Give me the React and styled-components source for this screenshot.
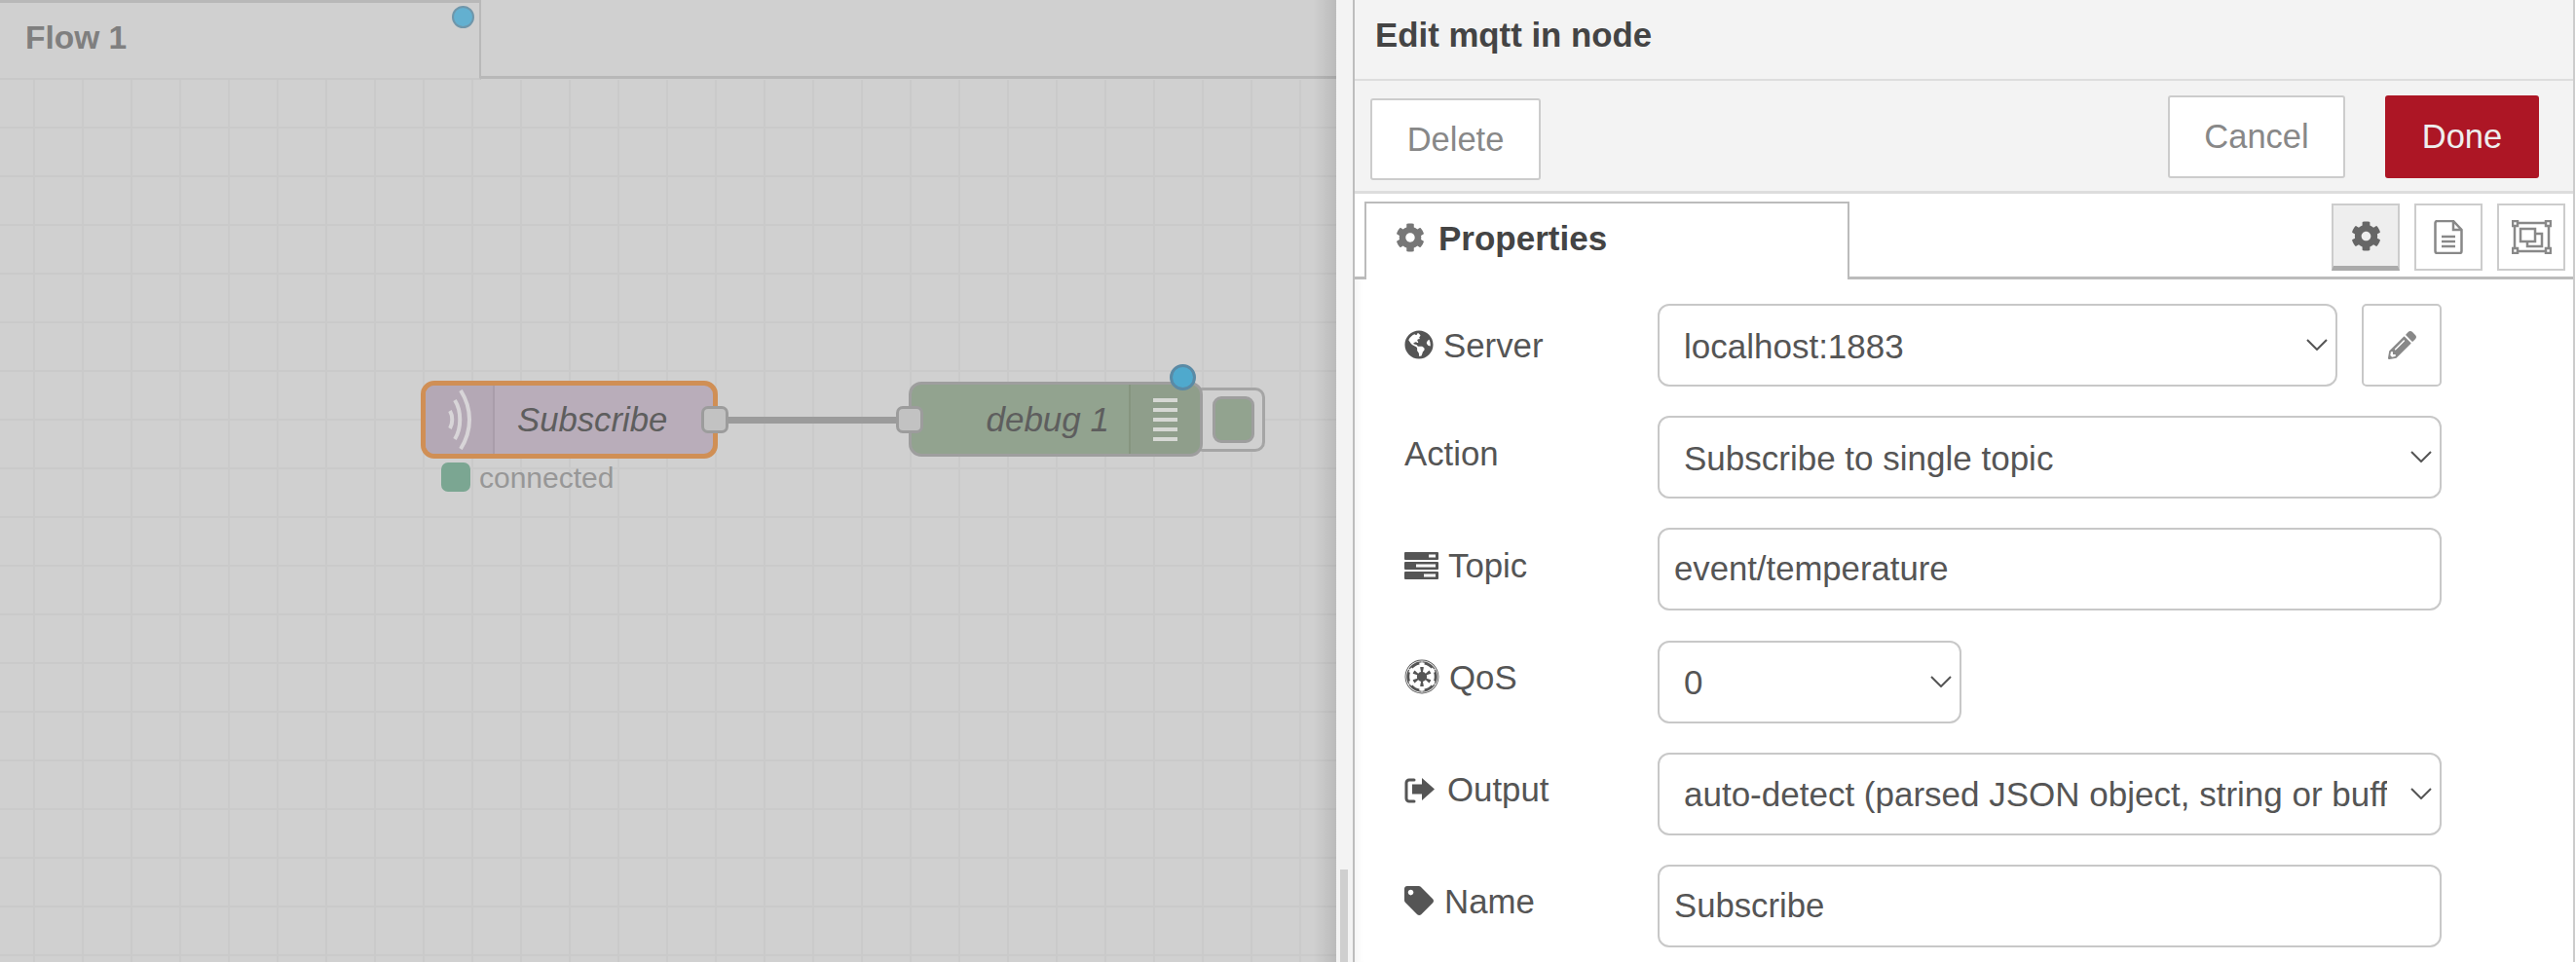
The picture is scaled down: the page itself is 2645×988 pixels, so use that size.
import styled, { createGlobalStyle } from "styled-components";
import { FaCog, FaEmpire, FaGlobeAmericas, FaPencilAlt, FaTag } from "react-icons/fa";

const GlobalStyle = createGlobalStyle`
  html, body { margin: 0; padding: 0; background: #fff; }
  * { box-sizing: border-box; }
  body { font-family: "Liberation Sans", Arial, sans-serif; overflow: hidden; }
`;

const TasksIcon = () => (
  <svg width="35" height="28" viewBox="0 0 35 28">
    <g fill="#555">
      <rect y="0" width="35" height="8" rx="1" />
      <rect y="10" width="35" height="8" rx="1" />
      <rect y="20" width="35" height="8" rx="1" />
    </g>
    <g fill="#fff">
      <rect x="25" y="2.5" width="7" height="3" />
      <rect x="12" y="12.5" width="20" height="3" />
      <rect x="20" y="22.5" width="12" height="3" />
    </g>
  </svg>
);

const SignOutIcon = () => (
  <svg width="31" height="26" viewBox="0 0 31 26">
    <path d="M10 2H5a3 3 0 0 0-3 3v16a3 3 0 0 0 3 3h5" fill="none" stroke="#555" strokeWidth="3" strokeLinecap="round" />
    <path d="M18 0 31 11.500 18 23V16.500H8V6.500H18Z" fill="#555" />
  </svg>
);

const FileIcon = () => (
  <svg width="30" height="35" viewBox="0 0 30 35" fill="none" stroke="#888" strokeWidth="2.5">
    <path d="M1.500 3a2 2 0 0 1 2-2H20l8.500 9v22a2 2 0 0 1-2 2h-23a2 2 0 0 1-2-2Z" />
    <path d="M20 1v9h8.500" />
    <path d="M8 17H22M8 22H22M8 27H22" />
  </svg>
);

const AreaIcon = () => (
  <svg width="41" height="35" viewBox="0 0 41 35" fill="none" stroke="#888" strokeWidth="2.5">
    <path d="M6 3H35M38 6V29M35 32H6M3 29V6" />
    <rect x="1" y="1" width="5" height="5" />
    <rect x="35" y="1" width="5" height="5" />
    <rect x="1" y="29" width="5" height="5" />
    <rect x="35" y="29" width="5" height="5" />
    <rect x="9" y="9" width="15" height="13" />
    <path d="M24 14H31V27H16V22" />
  </svg>
);

const WaveIcon = () => (
  <svg width="24" height="62" viewBox="0 0 24 62" fill="none" stroke="#d8d5d8" strokeWidth="4">
    <path d="M2 22C5 27 5 35 2 40" />
    <path d="M7 11C14 22 14 40 7 51" />
    <path d="M13 1C25 20 25 42 13 61" />
  </svg>
);

const Chevron = () => (
  <svg width="22" height="12" viewBox="0 0 22 12" fill="none" stroke="#555" strokeWidth="2">
    <path d="M1 1 11 11 21 1" />
  </svg>
);

const fields = [
  { label: "Server", icon: <FaGlobeAmericas size={30} color="#555" />, offset: 27, gap: 10, kind: "server", value: "localhost:1883" },
  { label: "Action", offset: 23, kind: "select", value: "Subscribe to single topic" },
  { label: "Topic", icon: <TasksIcon />, offset: 23, gap: 10, kind: "input", value: "event/temperature" },
  { label: "QoS", icon: <FaEmpire size={36} color="#555" />, iconDrop: 3, offset: 22, gap: 10, kind: "short", value: "0" },
  { label: "Output", icon: <SignOutIcon />, offset: 22, gap: 13, kind: "select", value: "auto-detect (parsed JSON object, string or buffer)" },
  { label: "Name", icon: <FaTag size={30} color="#555" />, offset: 22, gap: 11, kind: "input", value: "Subscribe" },
];

function Field({ field }) {
  if (field.kind === "input") {
    return <TextInput defaultValue={field.value} />;
  }
  const select = (
    <SelectWrap $width={field.kind === "short" ? "312px" : "100%"} $grow={field.kind === "server"}>
      <Select defaultValue={field.value}>
        <option>{field.value}</option>
      </Select>
      <ChevronSlot><Chevron /></ChevronSlot>
    </SelectWrap>
  );
  if (field.kind === "server") {
    return (
      <ServerRow>
        {select}
        <EditButton><FaPencilAlt size={29} color="#888" /></EditButton>
      </ServerRow>
    );
  }
  return select;
}

export default function App() {
  return (
    <Page>
      <GlobalStyle />
      <Canvas>
        <TabBar>
          <FlowTab>
            Flow 1
            <TabDot />
          </FlowTab>
          <TabFiller />
        </TabBar>
        <Workspace>
          <Wire />
          <MqttNode>
            <MqttIcon><WaveIcon /></MqttIcon>
            <NodeLabel>Subscribe</NodeLabel>
            <Port $side="right" />
          </MqttNode>
          <StatusRow>
            <StatusDot />
            connected
          </StatusRow>
          <DebugButton><DebugSquare /></DebugButton>
          <DebugNode>
            <DebugLabel>debug 1</DebugLabel>
            <DebugIcon>
              {[0, 1, 2, 3, 4].map((i) => <DebugLine key={i} />)}
            </DebugIcon>
            <Port $side="left" />
            <ChangedDot />
          </DebugNode>
        </Workspace>
        <EdgeShadow />
      </Canvas>

      <Handle><HandleThumb /></Handle>

      <Tray>
        <TrayHeader>Edit mqtt in node</TrayHeader>
        <Toolbar>
          <DeleteButton>Delete</DeleteButton>
          <ToolbarRight>
            <CancelButton>Cancel</CancelButton>
            <DoneButton>Done</DoneButton>
          </ToolbarRight>
        </Toolbar>
        <TabRow>
          <PropertiesTab>
            <FaCog size={30} color="#777" />
            Properties
          </PropertiesTab>
          <IconTabs>
            <IconTab $active><FaCog size={31} color="#666" /></IconTab>
            <IconTab><FileIcon /></IconTab>
            <IconTab><AreaIcon /></IconTab>
          </IconTabs>
        </TabRow>
        <Form>
          {fields.map((field) => (
            <FormRow key={field.label}>
              <Label $offset={field.offset} $gap={field.gap} $drop={field.iconDrop}>
                {field.icon}
                {field.label}
              </Label>
              <Field field={field} />
            </FormRow>
          ))}
        </Form>
      </Tray>
    </Page>
  );
}

const Page = styled.div`
  display: flex;
  width: 2645px;
  height: 988px;
  overflow: hidden;
  background: #fff;
`;

const Canvas = styled.div`
  position: relative;
  flex: 0 0 1372px;
  display: flex;
  flex-direction: column;
  background: #d0d0d0;
`;

const TabBar = styled.div`
  display: flex;
  height: 82px;
  flex-shrink: 0;
`;

const FlowTab = styled.div`
  position: relative;
  width: 494px;
  height: 82px;
  padding: 17px 0 0 26px;
  border-top: 3px solid #b8b8b8;
  border-right: 2px solid #b8b8b8;
  border-bottom: 2px solid #c8c8c8;
  font-size: 33.5px;
  line-height: 38px;
  font-weight: 700;
  color: #7f7f7f;
`;

const TabDot = styled.span`
  position: absolute;
  left: 464px;
  top: 3px;
  width: 23px;
  height: 23px;
  border-radius: 50%;
  background: #63b0d0;
  border: 2px solid #6f96aa;
`;

const TabFiller = styled.div`
  flex: 1;
  height: 81px;
  border-bottom: 3px solid #b8b8b8;
`;

const Workspace = styled.div`
  position: relative;
  flex: 1;
  background-color: #d0d0d0;
  background-image:
    linear-gradient(to right, #cacaca 2px, transparent 2px),
    linear-gradient(to bottom, #cacaca 2px, transparent 2px);
  background-size: 50px 50px;
  background-position: 34px -2px;
`;

const EdgeShadow = styled.div`
  position: absolute;
  top: 0;
  right: 0;
  bottom: 0;
  width: 24px;
  background: linear-gradient(to right, rgba(0, 0, 0, 0), rgba(0, 0, 0, 0.1));
`;

const Wire = styled.div`
  position: absolute;
  left: 745px;
  top: 346px;
  width: 180px;
  height: 7px;
  background: #9b9b9b;
`;

const MqttNode = styled.div`
  position: absolute;
  left: 432px;
  top: 309px;
  width: 305px;
  height: 80px;
  display: flex;
  background: #b9adba;
  border: 5px solid #d08f55;
  border-radius: 14px;
`;

const MqttIcon = styled.div`
  width: 71px;
  display: flex;
  align-items: center;
  justify-content: center;
  background: #b4a8b5;
  border-right: 2px solid #a99daa;
  border-radius: 9px 0 0 9px;
`;

const NodeLabel = styled.div`
  flex: 1;
  padding: 15px 0 0 23px;
  font-size: 34.7px;
  line-height: 40px;
  font-style: italic;
  color: #5e5e5e;
`;

const Port = styled.span`
  position: absolute;
  top: ${(p) => (p.$side === "right" ? "21px" : "22px")};
  ${(p) => (p.$side === "right" ? "right: -16px;" : "left: -16px;")}
  width: 28px;
  height: 28px;
  background: #c2c2c2;
  border: 3px solid #9c9c9c;
  border-radius: 7px;
`;

const StatusRow = styled.div`
  position: absolute;
  left: 453px;
  top: 394px;
  display: flex;
  align-items: center;
  gap: 9px;
  height: 30px;
  font-size: 30px;
  color: #979797;
`;

const StatusDot = styled.span`
  width: 30px;
  height: 30px;
  margin-top: -2px;
  background: #7ba692;
  border-radius: 7px;
`;

const DebugButton = styled.div`
  position: absolute;
  left: 1225px;
  top: 316px;
  width: 74px;
  height: 66px;
  padding: 6px 8px 6px 0;
  display: flex;
  justify-content: flex-end;
  border: 3px solid #a5a5a5;
  border-radius: 10px;
  background: #d0d0d0;
`;

const DebugSquare = styled.span`
  width: 43px;
  height: 48px;
  background: #92a38f;
  border: 3px solid #9e9e9e;
  border-radius: 9px;
`;

const DebugNode = styled.div`
  position: absolute;
  left: 933px;
  top: 310px;
  width: 302px;
  height: 77px;
  display: flex;
  background: #92a38f;
  border: 3px solid #9e9e9e;
  border-radius: 13px;
`;

const DebugLabel = styled.div`
  flex: 1;
  padding: 16px 20px 0 0;
  text-align: right;
  font-size: 35px;
  line-height: 40px;
  font-style: italic;
  color: #5e5e5e;
`;

const DebugIcon = styled.div`
  width: 73px;
  display: flex;
  flex-direction: column;
  align-items: center;
  justify-content: center;
  gap: 6px;
  background: #8f9e8b;
  border-left: 2px solid #86957f;
  border-radius: 0 10px 10px 0;
`;

const DebugLine = styled.span`
  width: 25px;
  height: 4px;
  background: #d6d8d4;
`;

const ChangedDot = styled.span`
  position: absolute;
  left: 265px;
  top: -21px;
  width: 27px;
  height: 27px;
  border-radius: 50%;
  background: #4fa9cd;
  border: 3px solid #5a8aa5;
`;

const Handle = styled.div`
  flex: 0 0 19px;
  padding: 893px 5px 0 4px;
  background: #f3f3f3;
  border-right: 2px solid #bdbdbd;
`;

const HandleThumb = styled.div`
  height: 95px;
  background: #cfcfcf;
`;

const Tray = styled.div`
  flex: 1;
  display: flex;
  flex-direction: column;
  border-right: 2px solid #ccc;
  margin-right: 1px;
`;

const TrayHeader = styled.div`
  height: 83px;
  padding: 17px 0 0 21px;
  background: #f3f3f3;
  border-bottom: 2px solid #ddd;
  font-size: 34.8px;
  line-height: 38px;
  font-weight: 700;
  color: #444;
`;

const Toolbar = styled.div`
  height: 116px;
  display: flex;
  justify-content: space-between;
  padding: 15px 35px 0 16px;
  background: #f3f3f3;
  border-bottom: 3px solid #ddd;
`;

const ToolbarRight = styled.div`
  display: flex;
  gap: 41px;
`;

const ActionButton = styled.button`
  height: 85px;
  border: 2px solid #ccc;
  border-radius: 3px;
  background: #fff;
  font-family: inherit;
  font-size: 34.5px;
  color: #888;
  padding: 0;
`;

const DeleteButton = styled(ActionButton)`
  width: 175px;
  height: 84px;
  margin-top: 3px;
`;

const CancelButton = styled(ActionButton)`
  width: 182px;
`;

const DoneButton = styled(ActionButton)`
  width: 158px;
  background: #ad1625;
  border-color: #ad1625;
  color: #eee;
`;

const TabRow = styled.div`
  height: 88px;
  display: flex;
  justify-content: space-between;
  padding: 8px 8px 0 10px;
  border-bottom: 3px solid #bbb;
  background: #fff;
`;

const PropertiesTab = styled.div`
  width: 498px;
  height: 80px;
  display: flex;
  align-items: flex-start;
  gap: 14px;
  padding: 19px 0 0 30px;
  background: #fff;
  border: 2px solid #bbb;
  border-bottom: none;
  font-size: 35px;
  line-height: 34px;
  font-weight: 700;
  color: #444;

  svg {
    flex-shrink: 0;
    margin-top: 1px;
  }
`;

const IconTabs = styled.div`
  display: flex;
  gap: 15px;
  padding-top: 2px;
`;

const IconTab = styled.div`
  width: 70px;
  height: 69px;
  display: flex;
  align-items: center;
  justify-content: center;
  border: 2px solid #ccc;
  background: ${(p) => (p.$active ? "#eee" : "#fff")};
  border-bottom: ${(p) => (p.$active ? "5px solid #aaa" : "2px solid #ccc")};
`;

const Form = styled.div`
  flex: 1;
  display: flex;
  flex-direction: column;
  gap: 30.2px;
  padding: 25px 0 0 51px;
  box-shadow: inset 12px 0 12px -12px rgba(0, 0, 0, 0.08);
`;

const FormRow = styled.div`
  display: grid;
  grid-template-columns: 260px 805px;
  height: 85px;
`;

const Label = styled.label`
  display: flex;
  align-items: flex-end;
  align-self: start;
  gap: ${(p) => p.$gap || 0}px;
  height: 40px;
  margin-top: ${(p) => p.$offset}px;
  padding-bottom: 8px;
  font-size: 34.8px;
  line-height: 32px;
  color: #555;

  svg {
    flex-shrink: 0;
    margin-bottom: ${(p) => 2 - (p.$drop || 0)}px;
  }
`;

const fieldBox = `
  height: 85px;
  border: 2px solid #c8c8c8;
  border-radius: 12px;
  background: #fff;
  font-family: inherit;
  color: #555;
  outline: none;
`;

const TextInput = styled.input`
  ${fieldBox}
  width: 100%;
  padding: 0 15px;
  font-size: 34.7px;
`;

const ServerRow = styled.div`
  display: flex;
  gap: 25px;
`;

const SelectWrap = styled.div`
  position: relative;
  width: ${(p) => p.$width};
  ${(p) => p.$grow && "flex: 1;"}
`;

const Select = styled.select`
  ${fieldBox}
  width: 100%;
  padding: 1px 54px 0 25px;
  font-size: 35px;
  appearance: none;
`;

const ChevronSlot = styled.span`
  position: absolute;
  right: 10px;
  top: 36px;
  display: flex;
  pointer-events: none;
`;

const EditButton = styled.button`
  flex: 0 0 82px;
  height: 85px;
  padding: 0;
  display: flex;
  align-items: center;
  justify-content: center;
  background: #fff;
  border: 2px solid #c8c8c8;
  border-radius: 5px;
`;
